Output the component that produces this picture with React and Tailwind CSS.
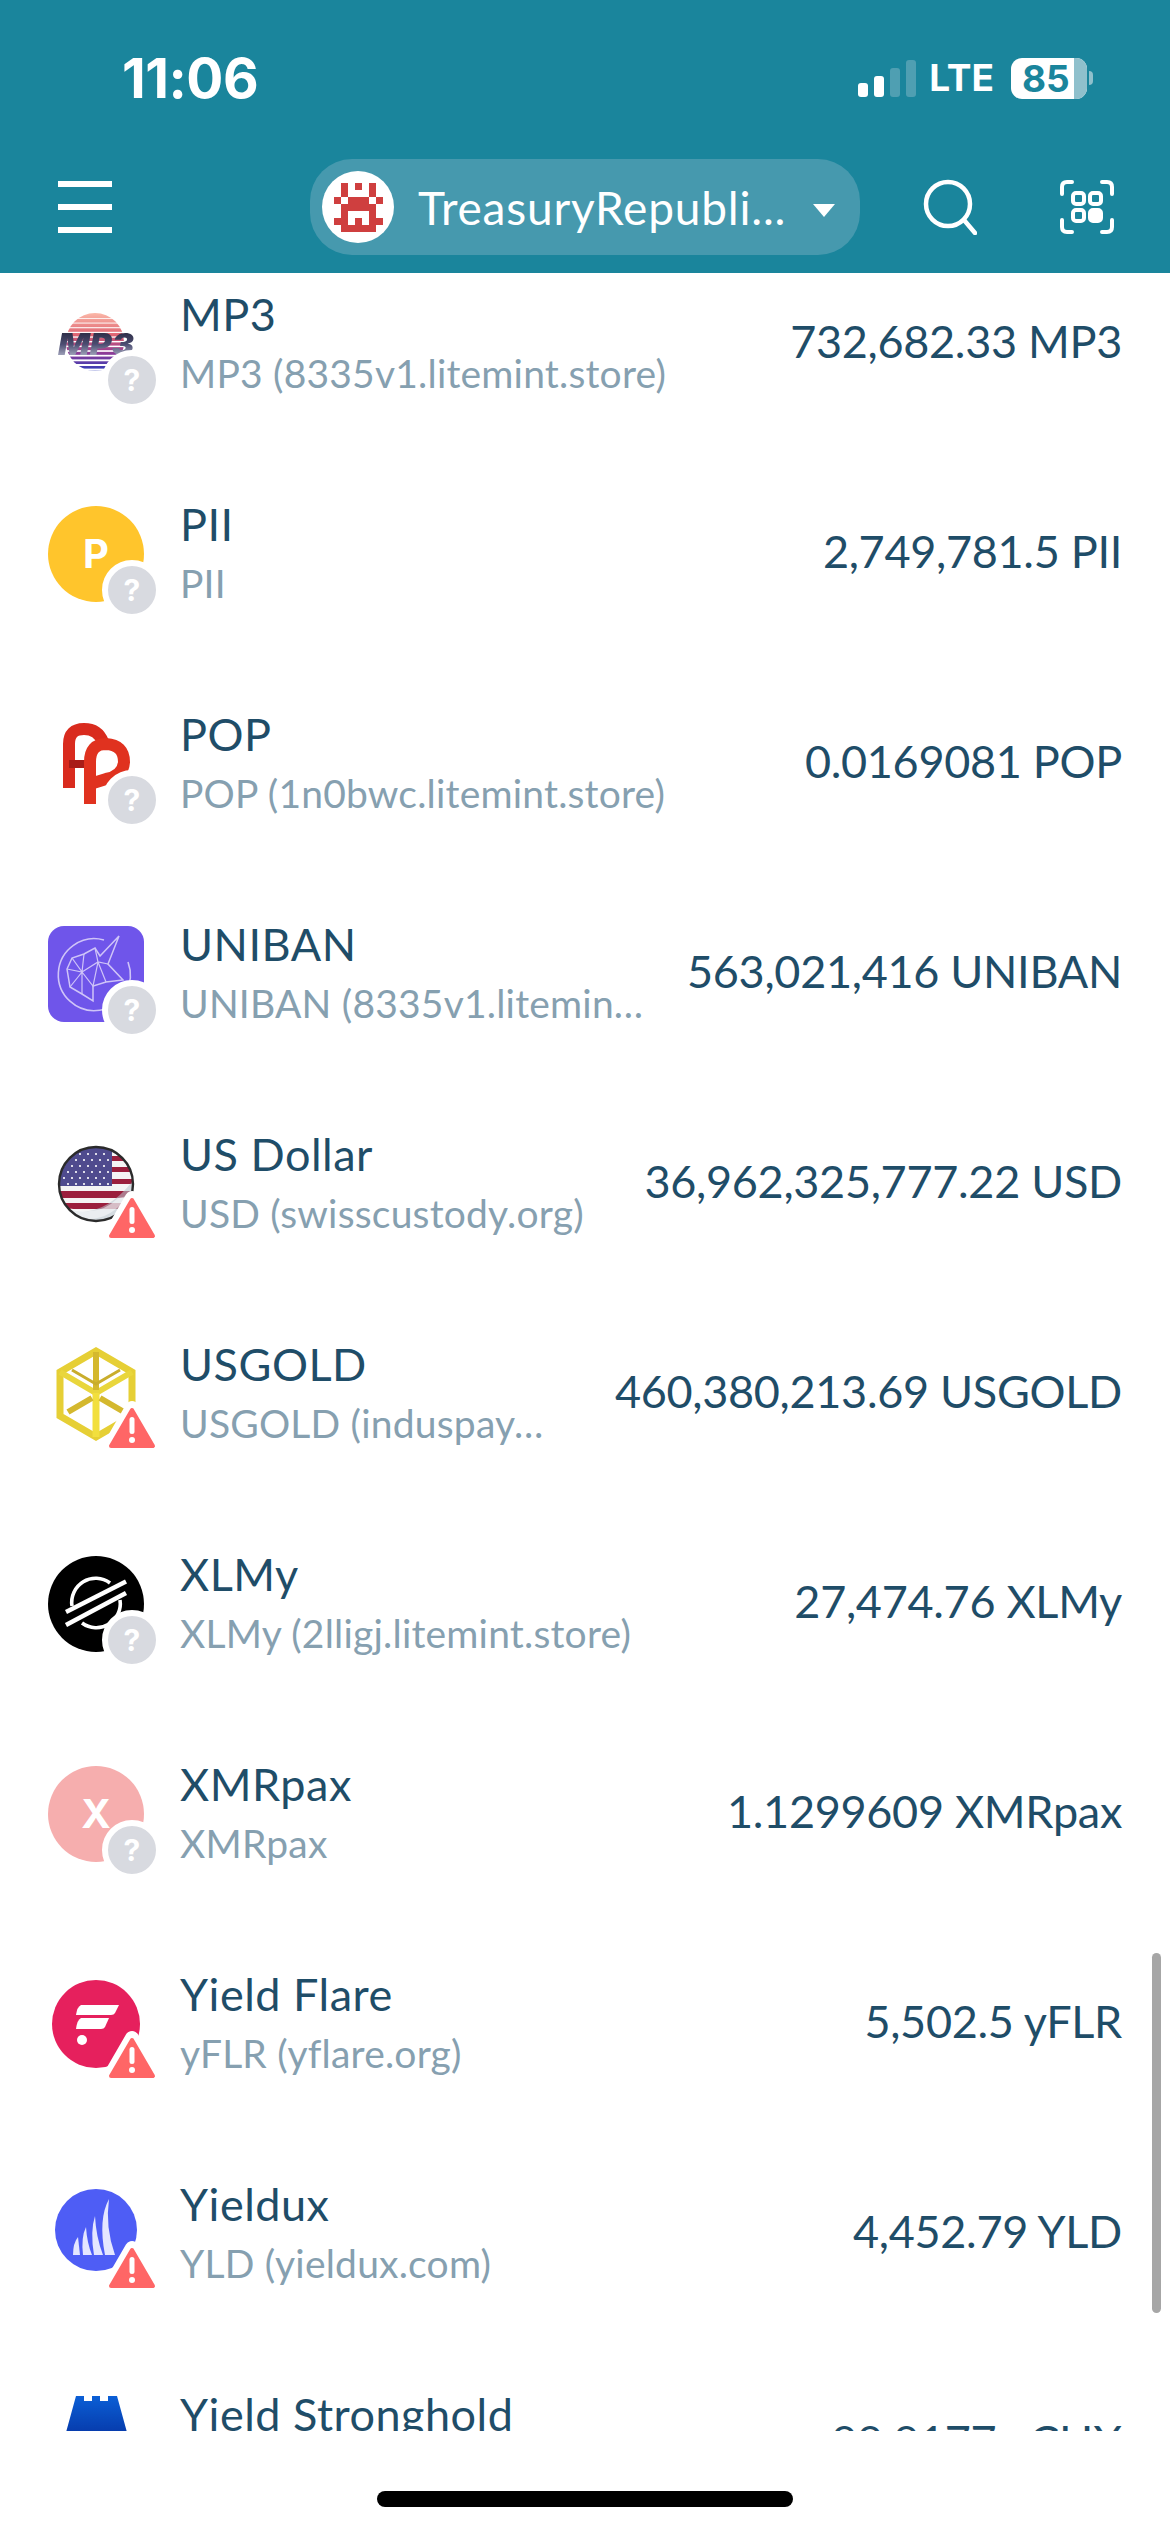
import React from "react";

const FONT = "font-['Lato','Open_Sans',sans-serif]";

function Question() {
  return (
    <div className="absolute right-[-12px] bottom-[-12px] box-content flex h-[48px] w-[48px] items-center justify-center rounded-full border-[6px] border-white bg-[#d8dae0] -m-[6px]">
      <span className="font-['Inter',sans-serif] text-[30px] leading-[36px] font-bold text-white">?</span>
    </div>
  );
}

function Warning() {
  return (
    <svg className="absolute left-[54px] top-[50px] h-[56px] w-[60px] overflow-visible" viewBox="0 0 60 56">
      <path d="M30 12 L52 50 H8 Z" fill="#ff6666" stroke="#fff" strokeWidth="14" strokeLinejoin="round" />
      <path d="M30 14 L51 50 H9 Z" fill="#ff6666" stroke="#ff6666" strokeWidth="4" strokeLinejoin="round" />
      <rect x="27.5" y="21" width="5" height="17" rx="2.5" fill="#fff" />
      <circle cx="30" cy="44" r="3" fill="#fff" />
    </svg>
  );
}

function Mp3Icon() {
  const stripes = [];
  for (let i = 0; i < 12; i++) {
    stripes.push(<rect key={i} x="0" y={22 + i * 4.6} width="96" height={0.8 + i * 0.12} fill="#fff" />);
  }
  return (
    <svg viewBox="0 0 96 96" className="h-[96px] w-[96px]">
      <defs>
        <linearGradient id="sun" x1="0" y1="0" x2="0" y2="1">
          <stop offset="0" stopColor="#fbb8a8" />
          <stop offset="0.4" stopColor="#dd5f6f" />
          <stop offset="0.7" stopColor="#8a3a98" />
          <stop offset="1" stopColor="#2f3fb8" />
        </linearGradient>
        <linearGradient id="chrome" x1="0" y1="0" x2="0" y2="1">
          <stop offset="0" stopColor="#1d1d30" />
          <stop offset="0.5" stopColor="#4a4c70" />
          <stop offset="1" stopColor="#d2d4e6" />
        </linearGradient>
        <filter id="soft"><feGaussianBlur stdDeviation="0.5" /></filter>
      </defs>
      <g filter="url(#soft)">
        <circle cx="47" cy="46" r="29" fill="url(#sun)" />
        {stripes}
        <text
          x="10"
          y="59"
          fontFamily="Inter, sans-serif"
          fontWeight="900"
          fontStyle="italic"
          fontSize="30"
          textLength="76"
          lengthAdjust="spacingAndGlyphs"
          fill="url(#chrome)"
        >
          MP3
        </text>
      </g>
    </svg>
  );
}

function PopIcon() {
  return (
    <svg viewBox="0 0 96 96" className="h-[96px] w-[96px]" fill="none" strokeWidth="12">
      <path d="M21 72 V28 Q21 13 36 13 Q50 13 55 26" stroke="#d92b1e" />
      <path d="M21 48 H44" stroke="#a81c18" strokeWidth="8" />
      <path d="M42 88 V46 Q42 28 58 28 Q76 29 76 46 Q75 60 58 63 L42 68" stroke="#e0321f" />
    </svg>
  );
}

function UnibanIcon() {
  return (
    <div className="flex h-[96px] w-[96px] items-center justify-center rounded-[16px] bg-[#6f55ea]">
      <svg viewBox="0 0 96 96" className="h-[96px] w-[96px]" fill="none" stroke="#cfc4f8" strokeWidth="1.2">
        <path d="M56 14 A36 36 0 1 0 80 36" strokeWidth="1.6" />
        <path d="M71 10 L52 30 L47 22 L36 28 L24 32 L19 43 L22 61 L34 68 L45 75 L45 60 L58 56 L75 54 L60 38 Z" strokeWidth="1.5" />
        <path d="M36 28 L34 46 L19 43 M24 32 L34 46 L22 61 M34 46 L45 60 L50 36 L47 22 M34 46 L50 36 L60 38 M50 36 L58 56 M34 46 L34 68" />
      </svg>
    </div>
  );
}

function FlagIcon() {
  const stars = [];
  for (let r = 0; r < 6; r++) {
    for (let c = 0; c < 6; c++) {
      stars.push(<circle key={`${r}-${c}`} cx={16 + c * 8 + (r % 2) * 4} cy={18 + r * 6} r="1.1" fill="#fff" />);
    }
  }
  return (
    <svg viewBox="0 0 96 96" className="h-[96px] w-[96px]">
      <defs>
        <clipPath id="flag"><circle cx="48" cy="48" r="37" /></clipPath>
      </defs>
      <g clipPath="url(#flag)">
        <rect x="0" y="0" width="96" height="96" fill="#f4f4f4" />
        <rect x="0" y="20" width="96" height="5" fill="#9b1f3d" />
        <rect x="0" y="31" width="96" height="5" fill="#9b1f3d" />
        <rect x="0" y="43" width="96" height="5" fill="#9b1f3d" />
        <rect x="0" y="55" width="96" height="7" fill="#9b1f3d" />
        <rect x="0" y="67" width="96" height="6" fill="#9b1f3d" />
        <rect x="0" y="0" width="64" height="50" fill="#4f4b8e" />
        {stars}
        <path d="M12 70 Q50 88 84 46 L90 90 H10 Z" fill="#b9c6cf" opacity="0.55" />
        <path d="M22 72 Q50 82 70 62 L80 60 Q60 88 30 82 Z" fill="#fff" opacity="0.5" />
      </g>
      <circle cx="48" cy="48" r="37" fill="none" stroke="#2b2b2b" strokeWidth="2.4" />
    </svg>
  );
}

function GoldIcon() {
  return (
    <svg viewBox="0 0 96 96" className="h-[96px] w-[96px]" fill="none" strokeLinejoin="miter">
      <path d="M48 5 L84 26 V70 L48 91 L12 70 V26 Z" stroke="#e6cf35" strokeWidth="7" />
      <path d="M12 26 L48 47 L84 26" stroke="#e9d63c" strokeWidth="6" />
      <path d="M48 47 V91" stroke="#f2df3d" strokeWidth="7" />
      <path d="M48 6 V44 M20 66 L44 52 M52 52 L76 66" stroke="#d4b82e" strokeWidth="6" />
      <path d="M24 24 L48 38 L72 24" stroke="#c9ad2c" strokeWidth="3" />
    </svg>
  );
}

function StellarIcon() {
  return (
    <div className="h-[96px] w-[96px] rounded-full bg-black">
      <svg viewBox="0 0 96 96" className="h-[96px] w-[96px]" fill="none" stroke="#fff">
        <path d="M24 50 A24 24 0 0 1 62 27" strokeWidth="3.6" />
        <path d="M72 44 A24 24 0 0 1 34 67" strokeWidth="3.6" />
        <path d="M18 56 L78 25.5" strokeWidth="4.5" />
        <path d="M18 69 L78 37" strokeWidth="4.5" />
      </svg>
    </div>
  );
}

function FlareIcon() {
  return (
    <div className="h-[88px] w-[88px] translate-x-[4px] translate-y-[4px] rounded-full bg-[#e6205d]">
      <svg viewBox="0 0 88 88" className="h-[88px] w-[88px]" fill="#fff">
        <path d="M29 25 H67 L63 33 Q62 35 59 35 H24 Q25 27 29 25 Z" />
        <path d="M29 38 H57 L53 47 Q52 49 49 49 H24 Q25 40 29 38 Z" />
        <circle cx="30" cy="60" r="5" />
      </svg>
    </div>
  );
}

function YieldIcon() {
  return (
    <div className="h-[82px] w-[82px] translate-x-[7px] translate-y-[3px] rounded-full bg-[#4e5df5]">
      <svg viewBox="0 0 82 82" className="h-[82px] w-[82px]" fill="#e4e6ff">
        <path d="M18 66 Q18 54 23 48 L25 66 Z" />
        <path d="M28 66 Q26 48 31 38 Q32 54 37 66 Z" />
        <path d="M39 66 Q35 42 40 27 Q41 48 48 66 Z" />
        <path d="M50 66 Q43 30 54 10 Q50 38 60 66 Z" />
      </svg>
    </div>
  );
}

function CastleIcon() {
  return (
    <svg viewBox="0 0 96 96" className="h-[96px] w-[96px]">
      <defs>
        <linearGradient id="castle" x1="0" y1="0" x2="0" y2="1">
          <stop offset="0" stopColor="#0b5fd6" />
          <stop offset="0.5" stopColor="#0638a8" />
        </linearGradient>
      </defs>
      <path d="M28 0 H36 V5 H44 V0 H52 V5 H60 V0 H69 L91 80 H6 Z" fill="url(#castle)" />
    </svg>
  );
}

function Letter({ bg, ch }) {
  return (
    <div className={`flex h-[96px] w-[96px] items-center justify-center rounded-full ${bg}`}>
      <span className="font-['Inter',sans-serif] text-[40px] font-bold text-white">{ch}</span>
    </div>
  );
}

const ROWS = [
  { icon: <Mp3Icon />, title: "MP3", sub: "MP3 (8335v1.litemint.store)", amount: "732,682.33 MP3", badge: "q" },
  { icon: <Letter bg="bg-[#ffc52c]" ch="P" />, title: "PII", sub: "PII", amount: "2,749,781.5 PII", badge: "q" },
  { icon: <PopIcon />, title: "POP", sub: "POP (1n0bwc.litemint.store)", amount: "0.0169081 POP", badge: "q" },
  { icon: <UnibanIcon />, title: "UNIBAN", sub: "UNIBAN (8335v1.litemin…", amount: "563,021,416 UNIBAN", badge: "q" },
  { icon: <FlagIcon />, title: "US Dollar", sub: "USD (swisscustody.org)", amount: "36,962,325,777.22 USD", badge: "w" },
  { icon: <GoldIcon />, title: "USGOLD", sub: "USGOLD (induspay…", amount: "460,380,213.69 USGOLD", badge: "w" },
  { icon: <StellarIcon />, title: "XLMy", sub: "XLMy (2lligj.litemint.store)", amount: "27,474.76 XLMy", badge: "q" },
  { icon: <Letter bg="bg-[#f6aeae]" ch="X" />, title: "XMRpax", sub: "XMRpax", amount: "1.1299609 XMRpax", badge: "q" },
  { icon: <FlareIcon />, title: "Yield Flare", sub: "yFLR (yflare.org)", amount: "5,502.5 yFLR", badge: "w" },
  { icon: <YieldIcon />, title: "Yieldux", sub: "YLD (yieldux.com)", amount: "4,452.79 YLD", badge: "w" },
  { icon: <CastleIcon />, title: "Yield Stronghold", sub: "yCHX (yieldstronghold.com)", amount: "88.8177 yCHX", badge: null },
];

function Row({ row }) {
  return (
    <div className="flex h-[210px] items-center pr-[48px] pl-[48px]">
      <div className="relative mt-[4px] h-[96px] w-[96px] shrink-0">
        {row.icon}
        {row.badge === "q" && <Question />}
        {row.badge === "w" && <Warning />}
      </div>
      <div className="ml-[36px] min-w-0 flex-1">
        <div className="text-[45px] leading-[50px] tracking-[0.5px] whitespace-nowrap text-[#1f4d68]">{row.title}</div>
        <div className="mt-[11px] text-[39px] leading-[46px] tracking-[0.2px] whitespace-nowrap text-[#86a0b0]">{row.sub}</div>
      </div>
      <div className="ml-[32px] shrink-0 text-right text-[45px] tracking-[-0.3px] text-[#1f4d68]">{row.amount}</div>
    </div>
  );
}

function Avatar() {
  // 7x7 invader, one cell is 7px on a 72px circle
  const cells = [
    "0101010",
    "0100010",
    "1011101",
    "0111110",
    "0100010",
    "1101011",
    "0111110",
  ];
  return (
    <div className="h-[72px] w-[72px] shrink-0 overflow-hidden rounded-full bg-white">
      <svg viewBox="0 0 72 72" className="h-[72px] w-[72px]" fill="#cf3f3f" shapeRendering="crispEdges">
        {cells.map((line, r) =>
          line.split("").map((c, i) =>
            c === "1" ? <rect key={`${r}-${i}`} x={12 + i * 7} y={12 + r * 7} width="7" height="7" /> : null
          )
        )}
      </svg>
    </div>
  );
}

function Header() {
  return (
    <div className="h-[273px] shrink-0 bg-[#1a859c] text-white">
      {/* status bar */}
      <div className="flex h-[156px] items-center justify-between pr-[77px] pl-[122px]">
        <span className="font-['Inter',sans-serif] text-[55px] leading-[64px] font-bold tracking-[-0.5px]">11:06</span>
        <div className="flex items-center">
          <div className="flex items-end gap-[6px]">
            <div className="h-[14px] w-[10px] rounded-[3px] bg-white" />
            <div className="h-[21px] w-[10px] rounded-[3px] bg-white" />
            <div className="h-[29px] w-[10px] rounded-[3px] bg-[#4f9fb2]" />
            <div className="h-[37px] w-[10px] rounded-[3px] bg-[#4f9fb2]" />
          </div>
          <span className="ml-[13px] font-['Inter',sans-serif] text-[37px] leading-[44px] font-bold">LTE</span>
          <div className="ml-[17px] flex items-center">
            <div className="relative flex h-[41px] w-[76px] items-center rounded-[11px] bg-white pl-[11px]">
              <div className="absolute top-0 right-0 bottom-0 w-[13px] rounded-r-[11px] bg-[#8fc0cc]" />
              <span className="relative font-['Inter',sans-serif] text-[37px] leading-[41px] font-bold text-[#1a859c]">85</span>
            </div>
            <div className="ml-[2px] h-[14px] w-[4px] rounded-r-full bg-[#8fc0cc]" />
          </div>
        </div>
      </div>
      {/* nav */}
      <div className="mt-[3px] flex h-[96px] items-center">
        <div className="ml-[58px] flex w-[54px] flex-col gap-[17px]">
          <div className="h-[6px] bg-white" />
          <div className="h-[6px] bg-white" />
          <div className="h-[6px] bg-white" />
        </div>
        <div className="ml-[198px] flex h-[96px] w-[550px] items-center rounded-[42px] bg-[#4699ae] pl-[12px]">
          <Avatar />
          <span className={`ml-[24px] w-[395px] text-[46px] tracking-[0.8px] whitespace-nowrap ${FONT}`}>TreasuryRepubli...</span>
          <svg viewBox="0 0 22 13" className="mt-[6px] h-[13px] w-[22px]" fill="#fff">
            <path d="M0 0 H22 L11 13 Z" />
          </svg>
        </div>
        <svg viewBox="0 0 54 56" className="ml-[63px] h-[56px] w-[54px]" fill="none" stroke="#fff" strokeWidth="4.5">
          <circle cx="25" cy="25" r="22" />
          <path d="M41 41 L52 54" strokeLinecap="round" />
        </svg>
        <svg viewBox="0 0 54 54" className="ml-[83px] h-[54px] w-[54px]" fill="none" stroke="#fff" strokeWidth="4">
          <path d="M12 2 H7 Q2 2 2 7 V14 M42 2 H47 Q52 2 52 7 V14 M12 52 H7 Q2 52 2 47 V40 M42 52 H47 Q52 52 52 47 V40" strokeLinecap="round" />
          <rect x="13" y="13" width="11" height="11" rx="3" />
          <rect x="30" y="13" width="11" height="11" rx="3" />
          <rect x="13" y="30" width="11" height="11" rx="3" />
          <rect x="30" y="30" width="11" height="11" rx="3" fill="#fff" />
        </svg>
      </div>
    </div>
  );
}

export default function App() {
  return (
    <div className={`relative flex h-[2532px] w-[1170px] flex-col overflow-hidden bg-white ${FONT}`}>
      <Header />
      <div className="h-[2158px] shrink-0 overflow-hidden">
        <div className="-mt-[36px]">
          {ROWS.map((row) => (
            <Row key={row.title} row={row} />
          ))}
        </div>
      </div>
      <div className="flex flex-1 justify-center pt-[60px]">
        <div className="h-[16px] w-[416px] rounded-full bg-black" />
      </div>
      {/* scroll indicator */}
      <div className="absolute top-[1953px] left-[1152px] h-[360px] w-[9px] rounded-full bg-[#a6a6a6]" />
    </div>
  );
}
